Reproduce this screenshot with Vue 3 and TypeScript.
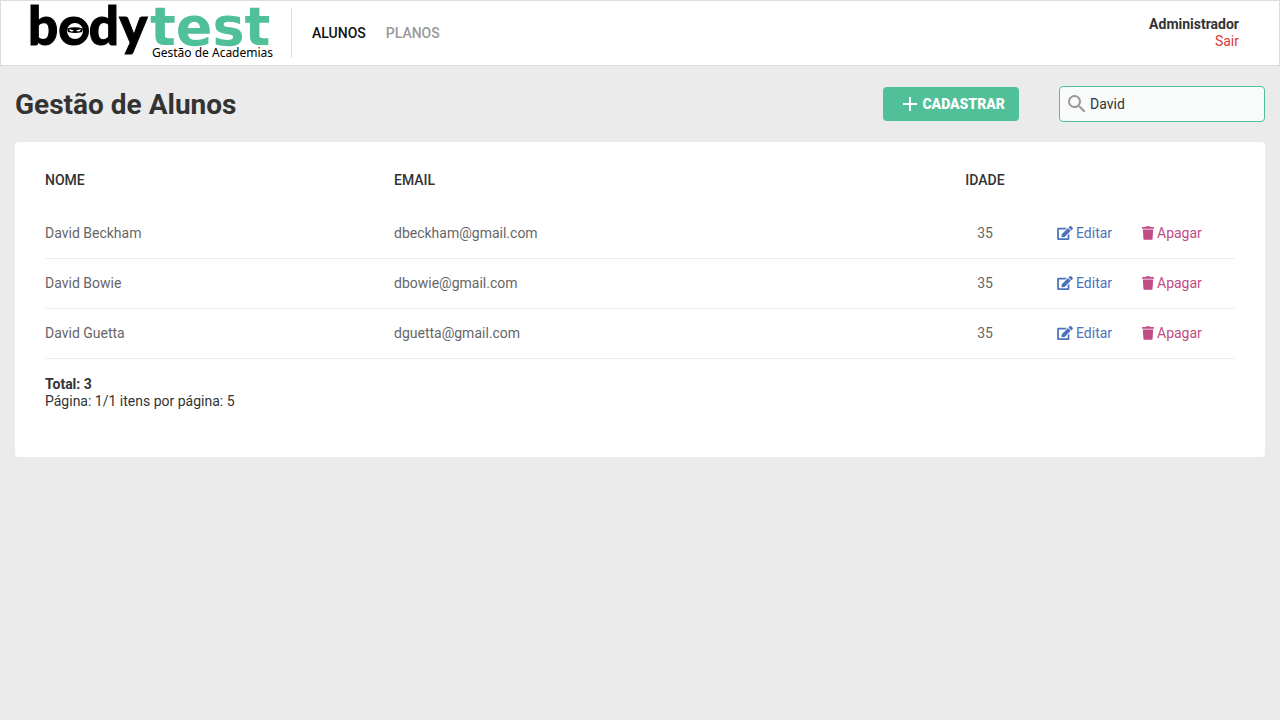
<script setup lang="ts">
import { computed, ref } from 'vue'

interface Student {
  id: number
  name: string
  email: string
  age: number
}

const students = ref<Student[]>([
  { id: 1, name: 'David Beckham', email: 'dbeckham@gmail.com', age: 35 },
  { id: 2, name: 'David Bowie', email: 'dbowie@gmail.com', age: 35 },
  { id: 3, name: 'David Guetta', email: 'dguetta@gmail.com', age: 35 },
])
const search = ref('David')
const pageSize = 5

const filtered = computed(() =>
  students.value.filter((s) => s.name.toLowerCase().includes(search.value.toLowerCase())),
)
const pages = computed(() => Math.max(1, Math.ceil(filtered.value.length / pageSize)))

function remove(id: number) {
  students.value = students.value.filter((s) => s.id !== id)
}
</script>

<template>
  <header class="topbar">
    <a href="#" class="logo" aria-label="bodytest">
      <svg width="241" height="64" viewBox="0 -7 241 64">
        <text class="word-body" x="-3" y="37">body</text>
        <text class="word-test" x="119" y="37">test</text>
        <text class="tagline" x="121" y="49">Gestão de Academias</text>
        <circle class="ring" cx="44" cy="23" r="11" />
        <path class="mask" d="M36 20.500Q44 18 52 20.500L51 24Q44 26 37 24Z" />
        <path class="eyes" d="M38 21L43 22.500Q41 24 39 23ZM50 21L45 22.500Q47 24 49 23Z" />
      </svg>
    </a>
    <nav class="menu">
      <a href="#" class="active">ALUNOS</a>
      <a href="#">PLANOS</a>
    </nav>
    <div class="account">
      <strong>Administrador</strong>
      <a href="#">Sair</a>
    </div>
  </header>

  <main class="content">
    <div class="heading">
      <h1>Gestão de Alunos</h1>
      <button type="button" class="create">
        <svg width="20" height="20" viewBox="0 0 20 20"><path d="M10 3V17M3 10H17" /></svg>
        CADASTRAR
      </button>
      <label class="search">
        <svg width="24" height="24" viewBox="0 0 24 24">
          <path d="M15.500 14h-.79l-.28-.27A6.470 6.470 0 0 0 16 9.500 6.500 6.500 0 1 0 9.500 16c1.610 0 3.090-.59 4.230-1.570l.27.28v.79l5 4.990L20.490 19l-4.990-5zm-6 0C7.010 14 5 11.990 5 9.500S7.010 5 9.500 5 14 7.010 14 9.500 11.990 14 9.500 14z" />
        </svg>
        <input v-model="search" type="text" aria-label="Buscar aluno" />
      </label>
    </div>

    <section class="card">
      <table>
        <colgroup>
          <col class="col-name" />
          <col />
          <col class="col-age" />
          <col class="col-edit" />
          <col class="col-delete" />
        </colgroup>
        <thead>
          <tr>
            <th>NOME</th>
            <th>EMAIL</th>
            <th class="center">IDADE</th>
            <th></th>
            <th></th>
          </tr>
        </thead>
        <tbody>
          <tr v-for="student in filtered" :key="student.id">
            <td>{{ student.name }}</td>
            <td>{{ student.email }}</td>
            <td class="center">{{ student.age }}</td>
            <td>
              <a href="#" class="action edit">
                <svg width="16" height="14" viewBox="0 0 576 512">
                  <path d="M402.600 83.200l90.200 90.200c3.800 3.800 3.800 10 0 13.800L274.400 405.600l-92.800 10.300c-12.400 1.400-22.900-9.100-21.500-21.500l10.300-92.800L388.800 83.200c3.800-3.800 10-3.800 13.800 0zm162-22.900l-48.800-48.800c-15.200-15.200-39.900-15.200-55.200 0l-35.400 35.400c-3.800 3.800-3.800 10 0 13.800l90.200 90.200c3.800 3.800 10 3.800 13.800 0l35.400-35.400c15.200-15.300 15.200-40 0-55.200zM384 346.200V448H64V128h229.800c3.200 0 6.200-1.300 8.500-3.500l40-40c7.600-7.600 2.200-20.500-8.500-20.500H48C21.500 64 0 85.500 0 112v352c0 26.500 21.500 48 48 48h352c26.500 0 48-21.500 48-48V306.200c0-10.700-12.900-16-20.500-8.500l-40 40c-2.200 2.300-3.500 5.300-3.500 8.500z" />
                </svg>
                Editar
              </a>
            </td>
            <td>
              <button type="button" class="action delete" @click="remove(student.id)">
                <svg width="12" height="14" viewBox="0 0 448 512">
                  <path d="M432 32H312l-9.400-18.700A24 24 0 0 0 281.100 0H166.800a23.700 23.700 0 0 0-21.400 13.300L136 32H16A16 16 0 0 0 0 48v32a16 16 0 0 0 16 16h416a16 16 0 0 0 16-16V48a16 16 0 0 0-16-16zM53.200 467a48 48 0 0 0 47.900 45h245.800a48 48 0 0 0 47.900-45L416 128H32z" />
                </svg>
                Apagar
              </button>
            </td>
          </tr>
        </tbody>
      </table>
      <footer class="summary">
        <strong>Total: {{ filtered.length }}</strong>
        <span>Página: 1/{{ pages }} itens por página: {{ pageSize }}</span>
      </footer>
    </section>
  </main>
</template>

<style>
body {
  background: #ebebeb;
}
</style>

<style scoped>
.topbar,
.content {
  font-family: Roboto, sans-serif;
  font-size: 14px;
  line-height: 17px;
  color: #333;
  box-sizing: border-box;
}
a {
  text-decoration: none;
}
.topbar {
  display: flex;
  align-items: center;
  height: 66px;
  padding: 0 40px 0 30px;
  background: #fff;
  border: 1px solid #ddd;
}
.logo {
  display: flex;
  height: 50px;
  padding-right: 19px;
  border-right: 1px solid #ddd;
}
.logo svg {
  margin: -7px 0;
  overflow: visible;
}
.word-body {
  font: 900 53px Lato, sans-serif;
  fill: #000;
  stroke: #000;
  stroke-width: 1;
}
.word-test {
  font: 700 54px "DejaVu Sans", sans-serif;
  fill: #4fc098;
}
.tagline {
  font: 400 12px "Noto Sans", sans-serif;
  fill: #000;
}
.ring {
  fill: #fff;
  stroke: #000;
  stroke-width: 6;
}
.mask {
  fill: #000;
}
.eyes {
  fill: #fff;
}
.menu {
  display: flex;
  flex: 1;
  gap: 20px;
  margin-left: 20px;
}
.menu a {
  color: #999;
  font-weight: 500;
}
.menu .active {
  color: #111;
}
.account {
  display: flex;
  flex-direction: column;
  align-items: flex-end;
}
.account strong,
.summary strong {
  font-weight: 700;
}
.account a {
  color: #de3b3b;
}
.content {
  padding: 20px 15px;
}
.heading {
  display: flex;
  align-items: center;
  height: 36px;
  margin-bottom: 20px;
}
h1 {
  flex: 1;
  margin: 0;
  padding-top: 1px;
  font-size: 28px;
  line-height: 36px;
  font-weight: 700;
}
.create {
  display: flex;
  align-items: center;
  gap: 2px;
  height: 34px;
  margin-right: 40px;
  padding: 0 14px 0 17px;
  border: 0;
  border-radius: 4px;
  background: #4fc098;
  color: #fff;
  font: 900 14px Roboto, sans-serif;
}
.create svg {
  fill: none;
  stroke: #fff;
  stroke-width: 2;
}
.search {
  display: flex;
  align-items: center;
  box-sizing: border-box;
  width: 206px;
  height: 36px;
  padding: 0 5px;
  border: 1px solid #4fc098;
  border-radius: 4px;
  background: #f8fbfa;
}
.search svg {
  flex: none;
  fill: #999;
}
.search input {
  flex: 1;
  min-width: 0;
  padding: 0 1px;
  border: 0;
  outline: 0;
  background: transparent;
  color: #333;
  font: 14px Roboto, sans-serif;
}
.card {
  padding: 30px 30px 47px;
  border-radius: 4px;
  background: #fff;
}
table {
  width: 100%;
  border-collapse: collapse;
  table-layout: fixed;
}
.col-name {
  width: 29.33%;
}
.col-age {
  width: 120px;
}
.col-edit {
  width: 97px;
}
.col-delete {
  width: 93px;
}
th {
  height: 37px;
  padding: 0;
  text-align: left;
  vertical-align: top;
  font-weight: 500;
}
td {
  height: 49px;
  padding: 0;
  border-bottom: 1px solid #eee;
  color: #666;
}
th.center,
td.center {
  text-align: center;
}
.action {
  display: flex;
  align-items: center;
  gap: 3px;
  padding: 0;
  border: 0;
  background: none;
  font: 14px/17px Roboto, sans-serif;
}
.action svg {
  margin-bottom: 1px;
  fill: currentColor;
}
.edit {
  margin-left: 12px;
  color: #4d71bb;
}
.delete {
  color: #c04b85;
}
.summary {
  display: flex;
  flex-direction: column;
  padding-top: 17px;
}
</style>
